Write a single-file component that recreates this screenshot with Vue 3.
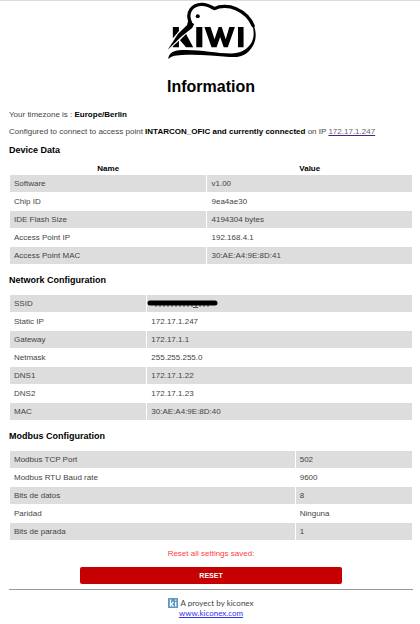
<script setup>
const deviceData = [
  ['Software', 'v1.00'],
  ['Chip ID', '9ea4ae30'],
  ['IDE Flash Size', '4194304 bytes'],
  ['Access Point IP', '192.168.4.1'],
  ['Access Point MAC', '30:AE:A4:9E:8D:41'],
]
const network = [
  ['SSID', ''],
  ['Static IP', '172.17.1.247'],
  ['Gateway', '172.17.1.1'],
  ['Netmask', '255.255.255.0'],
  ['DNS1', '172.17.1.22'],
  ['DNS2', '172.17.1.23'],
  ['MAC', '30:AE:A4:9E:8D:40'],
]
const modbus = [
  ['Modbus TCP Port', '502'],
  ['Modbus RTU Baud rate', '9600'],
  ['Bits de datos', '8'],
  ['Paridad', 'Ninguna'],
  ['Bits de parada', '1'],
]
</script>

<template>
  <main class="page">
    <header class="brand">
      <svg class="logo" viewBox="1.5 0.5 88 57" role="img" aria-label="KIWI">
        <path
          d="M25.500 22C20.500 12 27 3.500 37 3.800C42 4 45 6 49 8C54 5.300 63 5 70 8C78 11.500 84 17 87 25"
          fill="none" stroke="#000" stroke-width="3.200" stroke-linecap="round" stroke-linejoin="round"
        />
        <path d="M84 18C92 29 91 43 82 50.500C77 55 71 56 64 55.500C48 54.500 34 52.500 17 53.500C9 54 6 55 3.500 57.500C4 52 8 49 17 48.700C34 48 50 52 65 52C74 52 81 48.500 85.500 41C88.500 35 88 27 84 18Z" />
        <path d="M23 20L29 23L27 27L17 35L3 48.500L13 33L22 24Z" />
        <circle cx="32.500" cy="15.500" r="2" />
        <path d="M8 26H14V30L8 37ZM18 36L21 33L28 46H21L15 39ZM8 45L14 39.500V46H8ZM31 26H37V46H31ZM39 26H45L49 38L53 26H56L60 38L63.500 26H69L62 46H58L54.500 36L51 46H46ZM72 26H77.500V46H72Z" />
      </svg>
      <h1>Information</h1>
    </header>

    <p>Your timezone is : <b>Europe/Berlin</b></p>
    <p>
      Configured to connect to access point
      <b>INTARCON_OFIC and currently connected</b> on IP
      <a class="ip" href="#">172.17.1.247</a>
    </p>

    <h2>Device Data</h2>
    <table class="device">
      <thead>
        <tr><th scope="col">Name</th><th scope="col">Value</th></tr>
      </thead>
      <tbody>
        <tr v-for="[name, value] in deviceData" :key="name">
          <td>{{ name }}</td><td>{{ value }}</td>
        </tr>
      </tbody>
    </table>

    <h2>Network Configuration</h2>
    <table class="network">
      <tbody>
        <tr v-for="[name, value] in network" :key="name">
          <td>{{ name }}</td>
          <td>
            <svg v-if="name === 'SSID'" class="redacted" viewBox="0 0 72 8" aria-hidden="true">
              <path d="M8 6H62" stroke="#555" stroke-width="1" stroke-dasharray="2 2" />
              <path d="M46 7.500H51" stroke="#555" stroke-width="1" />
              <path d="M3 3H68" stroke="#000" stroke-width="5" stroke-linecap="round" />
            </svg>
            <template v-else>{{ value }}</template>
          </td>
        </tr>
      </tbody>
    </table>

    <h2>Modbus Configuration</h2>
    <table class="modbus">
      <tbody>
        <tr v-for="[name, value] in modbus" :key="name">
          <td>{{ name }}</td><td>{{ value }}</td>
        </tr>
      </tbody>
    </table>

    <p class="warning">Reset all settings saved:</p>
    <button class="reset" type="button">RESET</button>

    <hr />

    <footer>
      <div class="credit">
        <svg class="mark" viewBox="0 0 10 10" aria-hidden="true">
          <rect width="10" height="10" fill="#5b9bc4" />
          <path d="M2.500 1.500V8.500M5.500 4L3.200 6L5.500 8.500M7.700 4V8.500M7.700 1.500V2.800" fill="none" stroke="#fff" stroke-width="1.300" />
        </svg>
        A proyect by kiconex
      </div>
      <a href="#">www.kiconex.com</a>
    </footer>
  </main>
</template>

<style>
body {
  background: #fff;
}
</style>

<style scoped>
.page {
  padding: 0 7px 0 9px;
  border-top: 1px solid #dcdce0;
  font-family: "Liberation Sans", Arial, sans-serif;
  font-size: 8px;
  line-height: 10px;
  color: #444;
}
.brand {
  text-align: center;
}
.logo {
  display: block;
  width: 90px;
  height: 58px;
  margin: 0 auto;
}
h1 {
  margin: 18px 0 13px;
  font-size: 16px;
  line-height: 20px;
  color: #000;
}
p {
  margin: 0 0 7px;
}
b {
  color: #000;
}
.ip {
  color: #666;
  text-decoration-color: #551a8b;
}
h2 {
  margin: 9px 0 8px;
  font-size: 9px;
  line-height: 12px;
  color: #000;
}
p + h2 {
  margin: 7px 0;
}
table {
  width: 100%;
  table-layout: fixed;
  border-collapse: separate;
  border-spacing: 1px;
}
th {
  height: 10px;
  padding: 0;
  color: #000;
}
td {
  box-sizing: border-box;
  height: 17px;
  padding: 0 4px;
  line-height: 17px;
}
tbody tr:nth-child(odd) td {
  background: #ddd;
}
.device th:first-child {
  width: 49%;
}
.network td:first-child {
  width: 34%;
}
.modbus td:first-child {
  width: 71%;
}
.redacted {
  display: block;
  width: 72px;
  height: 8px;
  margin-left: -4px;
}
.warning {
  margin: 8px 0;
  text-align: center;
  color: #ff4040;
}
.reset {
  display: block;
  width: 65%;
  height: 17px;
  margin: 0 auto;
  padding: 0;
  border: 0;
  border-radius: 2px;
  background: #c60000;
  color: #fff;
  font: bold 7px "Liberation Sans", Arial, sans-serif;
}
hr {
  margin: 5px 0 8px;
  border: 0;
  border-top: 1px solid #999;
}
footer {
  text-align: center;
  font-family: Lato, sans-serif;
}
.credit {
  display: flex;
  align-items: center;
  justify-content: center;
  gap: 2px;
}
.mark {
  width: 10px;
  height: 10px;
}
footer a {
  color: #3333ee;
}
</style>
